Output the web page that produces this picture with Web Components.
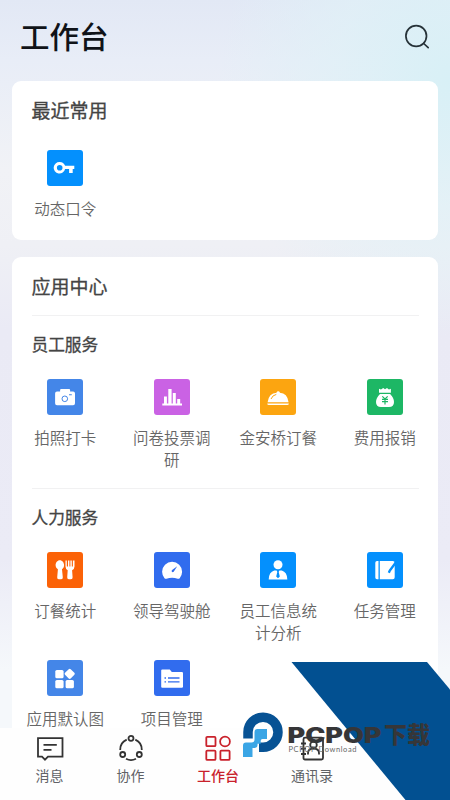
<!DOCTYPE html>
<html lang="zh-CN">
<head>
<meta charset="utf-8">
<title>工作台</title>
<style>
html,body{margin:0;height:100%;overflow:hidden}
body{font-family:"Noto Sans CJK SC","Noto Sans",sans-serif}
</style>
</head>
<body>
<work-screen>
  <page-header slot="header">工作台</page-header>
  <app-card style="height:159px">
    <span slot="title">最近常用</span>
    <app-grid style="--top:23px">
      <app-tile icon="key" color="#0490fd">动态口令</app-tile>
    </app-grid>
  </app-card>
  <app-card style="height:560px">
    <span slot="title">应用中心</span>
    <app-group name="员工服务" style="height:173px">
      <app-tile icon="camera" color="#4486e8">拍照打卡</app-tile>
      <app-tile icon="chart" color="#ca62e4">问卷投票调研</app-tile>
      <app-tile icon="dish" color="#fca510">金安桥订餐</app-tile>
      <app-tile icon="bag" color="#1db765">费用报销</app-tile>
    </app-group>
    <app-group name="人力服务">
      <app-tile icon="cutlery" color="#fb6207">订餐统计</app-tile>
      <app-tile icon="gauge" color="#316cee">领导驾驶舱</app-tile>
      <app-tile icon="person" color="#0490fd">员工信息统计分析</app-tile>
      <app-tile icon="note" color="#0490fd">任务管理</app-tile>
      <app-tile icon="apps" color="#4486e8">应用默认图</app-tile>
      <app-tile icon="folder" color="#316cee">项目管理</app-tile>
    </app-group>
  </app-card>
  <tab-bar slot="footer">
    <tab-item icon="message">消息</tab-item>
    <tab-item icon="share">协作</tab-item>
    <tab-item icon="work" active>工作台</tab-item>
    <tab-item icon="contacts">通讯录</tab-item>
  </tab-bar>
  <brand-mark slot="overlay"></brand-mark>
</work-screen>

<script>
const TILE_ICONS = {
  key: `<path fill-rule="evenodd" d="M12.7 12a5.8 5.8 0 0 1 5.4 3.8h9.2v3.3h-1.600v3.900h-3.600v-3.900h-4a5.800 5.800 0 1 1-5.400-7.100zm0 3a2.800 2.800 0 1 0 0 5.600 2.800 2.800 0 0 0 0-5.600z"/>`,
  camera: `<path d="M13.1 12.5V11q0-1 1-1h8q1 0 1 1v1.5h3q1.9 0 1.9 1.9v9.9q0 1.9-1.9 1.9H10q-1.9 0-1.9-1.9v-9.9q0-1.9 1.9-1.9z"/><circle cx="17.8" cy="19.8" r="2.8" fill="none" stroke="var(--tile)" stroke-width="1"/><path d="M22 15.3h2.8v1H22z" fill="var(--tile)"/>`,
  chart: `<path d="M8.3 24.6h19.7v1.8H8.3zM10 17.4h2.9v7H10zM14.3 10h3.3v14.4h-3.3zM18.8 14h3v10.400h-3zM23.2 20h3v4.400h-3z"/>`,
  dish: `<path d="M7.6 23.2q1.2-8.9 9-9.4v-.6a1.8 1.8 0 0 1 3.2 0v.6q7.6.5 8.8 9.4zM7.2 24.4h21.7q0 1.6-1.8 1.6H9q-1.8 0-1.8-1.6z"/><path d="M11 20q1.5-3.8 5.3-4.6" fill="none" stroke="var(--tile)" stroke-width="1"/>`,
  bag: `<path d="M12 9.8l2 .8 2.2-1.5 1.8 1.2 2-1.2 1.9 1.500 2-.8v4H12zM13 15h10.100q3.900 4 3.900 8 0 5-5 5h-8q-5 0-5-5 0-4 4-8z"/><path d="M15.300 17.300l2.700 2.700 2.700-2.700M15 20.300h6M15 22.700h6M18 20v5.500" fill="none" stroke="var(--tile)" stroke-width="1.200"/>`,
  cutlery: `<path d="M12.8 8.300c2.600 0 4.300 2.500 4.300 5 0 2-1 3.300-2.100 4l.8 8q.2 1.900-1.600 1.900h-2.500q-1.700 0-1.500-1.900l.7-8c-1.200-.7-2.300-2-2.300-4 0-2.500 1.700-5 4.200-5zM18.500 8.600h1.300v6h1.200v-6h1.400v6h1v-6h1.400v6h1.100v-6h1.600v6q0 2.500-2.400 3.700l.5 7q.1 1.900-1.600 1.900h-2.200q-1.700 0-1.600-1.900l.5-7q-2.200-1.200-2.200-3.700z"/>`,
  gauge: `<path d="M10.500 26.200a9.700 9.700 0 0 1-2.400-6.400 10 10 0 0 1 20 0q0 3.700-2.400 6.400-.8.800-2 .5-5.600-1.800-11.200 0-1.200.3-2-.5z"/><path d="M23.200 14.300l-3.500 5.400a1.300 1.300 0 0 1-2-.3q-.2-.9.4-1.300z" fill="var(--tile)"/>`,
  person: `<circle cx="18" cy="12.700" r="4.500"/><path d="M8.700 27.400q.1-7.500 5.600-9h7.400q5.500 1.500 5.600 9z"/><path d="M16.500 18h3l-.8 2 1.100 4.400-1.800 1.800-1.800-1.800 1.100-4.400z" fill="var(--tile)"/>`,
  note: `<path d="M10 9h1.500v18.200H10q-1.700 0-1.700-1.700V10.700q0-1.700 1.700-1.700zM12.800 9h13q1.900 0 1.900 1.900v14.400q0 1.900-1.900 1.900h-13z"/><path d="M29 10.300l-6.200 8.200-1 2.200" fill="none" stroke="var(--tile)" stroke-width="2.400"/>`,
  apps: `<rect x="8.300" y="10" width="8.300" height="8.300" rx="1.600"/><rect x="8.300" y="20" width="8.300" height="8.300" rx="1.600"/><rect x="18.600" y="20" width="8.300" height="8.300" rx="1.600"/><rect x="18.700" y="9.800" width="8" height="8" rx="1.400" transform="rotate(45 22.700 13.800)"/>`,
  folder: `<path d="M7.200 10.500q0-1.100 1.100-1.100h7.500l2 2.500h10q1.200 0 1.200 1.200v13.600q0 1.100-1.200 1.100H8.300q-1.100 0-1.100-1.100z"/><path d="M10.500 18h1.500m2 0h11.500M10.500 21.900h1.500m2 0h11.500" fill="none" stroke="var(--tile)" stroke-width="1.300"/>`
};
const TAB_ICONS = {
  message: `<path d="M3 4.200h24.500v18.500h-14.500l-3 3-3-3H3zM8.500 10.800h13.300M8.500 15.800h8"/>`,
  share: `<circle cx="15" cy="4.300" r="2.500"/><circle cx="6.700" cy="20.500" r="2.500"/><circle cx="23.300" cy="20.500" r="2.500"/><path d="M10.700 5.600a11 11 0 0 0-6.500 10.400M19.300 5.600a11 11 0 0 1 6.500 10.400M10 24.800a11 11 0 0 0 10 0"/>`,
  work: `<rect x="3.300" y="2.900" width="9.200" height="9.300" rx="1"/><circle cx="22" cy="7.500" r="4.900"/><rect x="3.300" y="16.600" width="9.200" height="9.300" rx="1"/><rect x="17.400" y="16.600" width="9.200" height="9.300" rx="1"/>`,
  contacts: `<rect x="6.500" y="3.700" width="19.500" height="21.800" rx="1.500"/><circle cx="16.500" cy="10.900" r="3.300"/><path d="M11 20.500V19q0-4.400 5.500-4.400t5.500 4.400v1.500M4 9.500h5M4 14.700h5M4 20h5"/>`
};

class Base extends HTMLElement {
  connectedCallback() {
    if (this.shadowRoot) return;
    const t = document.createElement('template');
    t.innerHTML = this.view();
    this.attachShadow({mode: 'open'}).append(t.content.cloneNode(true));
  }
}
customElements.define('work-screen', class extends Base { view() { return `
<style>
:host{position:relative;display:flex;flex-direction:column;height:100vh;overflow:hidden;
background:radial-gradient(ellipse 230px 260px at 100% 10%,#d8f0f6 0%,#dff1f7b0 50%,#e9f1f700 100%),
linear-gradient(180deg,#e2e8f5 0,#e8edf7 60px,#f1f2f6 170px,#eff0f5 245px,#eaeaf5 330px,#ebebf6 560px,#f5f8fb 670px)}
main{flex:1;min-height:0;overflow:hidden;padding:0 12px;display:flex;flex-direction:column;gap:17px}
</style>
<slot name="header"></slot><main><slot></slot></main><slot name="footer"></slot><slot name="overlay"></slot>`; }});

customElements.define('page-header', class extends Base { view() { return `
<style>
:host{display:flex;box-sizing:border-box;height:81px;padding:0 19px 8px 20px;align-items:center;justify-content:space-between;flex:none}
h1{margin:-4px 0 0;font-size:29.500px;font-weight:500;line-height:40px;color:#101318}
svg{width:28px;height:28px}
</style>
<h1><slot></slot></h1>
<svg viewBox="0 0 28 28" fill="none" stroke="#263238" stroke-width="1.700" stroke-linecap="round"><circle cx="13.200" cy="13" r="10.300"/><path d="M20.700 20.500l4.500 4.200"/></svg>`; }});

customElements.define('app-card', class extends Base { view() { return `
<style>
:host{display:block;box-sizing:border-box;flex:none;background:#fff;border-radius:9px}
h2{margin:0;padding:14px 0 0 19.500px;font-size:19px;font-weight:400;-webkit-text-stroke:.3px #444;line-height:30px;color:#444;height:32px}
</style>
<h2><slot name="title"></slot></h2><slot></slot>`; }});

customElements.define('app-grid', class extends Base { view() { return `
<style>
:host{display:grid;grid-template-columns:repeat(4,1fr);padding-top:var(--top,18px);row-gap:16px}
</style><slot></slot>`; }});

customElements.define('app-group', class extends Base { view() { return `
<style>
:host{display:block}
:host(:nth-of-type(1)){margin-top:12px}
hr{margin:0 19.500px;border:0;height:1px;background:#f1f1f2}
h3{margin:0;padding:16px 0 0 19.500px;font-size:16.700px;font-weight:400;-webkit-text-stroke:.3px #444;line-height:24px;color:#444}
app-grid{--top:23px}
</style>
<hr><h3>${this.getAttribute('name')}</h3><app-grid><slot></slot></app-grid>`; }
connectedCallback() {
  super.connectedCallback();
  /* The slot itself becomes the grid's only child, so its contents take part directly. */
  this.shadowRoot.querySelector('slot').style.display = 'contents';
}});

customElements.define('app-tile', class extends Base { view() { return `
<style>
:host{display:flex;flex-direction:column;align-items:center;--tile:${this.getAttribute('color')}}
svg{width:36px;height:36px;border-radius:3px;background:var(--tile);flex:none}
span{width:80px;margin-top:11px;margin-bottom:1px;font-size:15.500px;line-height:22px;color:#666;font-weight:350;text-align:center}
</style>
<svg viewBox="0 0 36 36" fill="#fff">${TILE_ICONS[this.getAttribute('icon')]}</svg><span><slot></slot></span>`; }});

customElements.define('tab-bar', class extends Base { view() { return `
<style>
:host{display:flex;flex:none;box-sizing:border-box;height:72px;padding:6px 0 0 9px;background:#fefefe;gap:0}
::slotted(*){width:81px}
::slotted(:nth-child(3)){width:94px}
::slotted(:nth-child(4)){width:94px}
</style><slot></slot>`; }});

customElements.define('tab-item', class extends Base { view() { return `
<style>
:host{display:flex;flex-direction:column;align-items:center;color:#606266;--line:#333}
:host([active]){color:#c9212b;--line:#c9212b;font-weight:500}
svg{width:30px;height:30px}
span{font-size:14px;line-height:22px;margin-top:0}
</style>
<svg viewBox="0 0 30 30" fill="none" stroke="var(--line)" stroke-width="1.800">${TAB_ICONS[this.getAttribute('icon')]}</svg><span><slot></slot></span>`; }});

customElements.define('brand-mark', class extends Base { view() { return `
<style>
:host{position:absolute;right:0;bottom:0;width:210px;height:138px;pointer-events:none}
svg{display:block}
.name{font:900 21px Inter,"Liberation Sans",sans-serif}
.cjk{font:900 23px "Noto Sans CJK SC",sans-serif}
.sub{font:7.500px Lato,sans-serif}
</style>
<svg width="210" height="138" viewBox="240 662 210 138">
<path d="M291.500 662H427L450 689.500V800H405.500z" fill="#025091"/>
<path d="M248 738.500V732A15 15 0 1 1 263 747.200H259" fill="none" stroke="#075294" stroke-width="9.500"/>
<path d="M257.500 729h9.500v10h-4.500q-1.800 0-1.800 1.800v3h-3.200v1.200q0 3-3.500 3h-1.500v9h-9.500v-11.500q0-3 3-3h5.500q3 0 3-3v-7.500q0-3 3-3z" fill="#3aa5e5"/>
<g fill="#363638">
<text class="name" x="287.500" y="742.500" textLength="94" lengthAdjust="spacingAndGlyphs">PCPOP</text>
<text class="cjk" x="384" y="743" textLength="46" lengthAdjust="spacingAndGlyphs">下载</text>
</g>
<text class="sub" x="288.500" y="751.800" fill="#686868" textLength="68">PCPOP Download</text>
</svg>`; }});
</script>
</body>
</html>
